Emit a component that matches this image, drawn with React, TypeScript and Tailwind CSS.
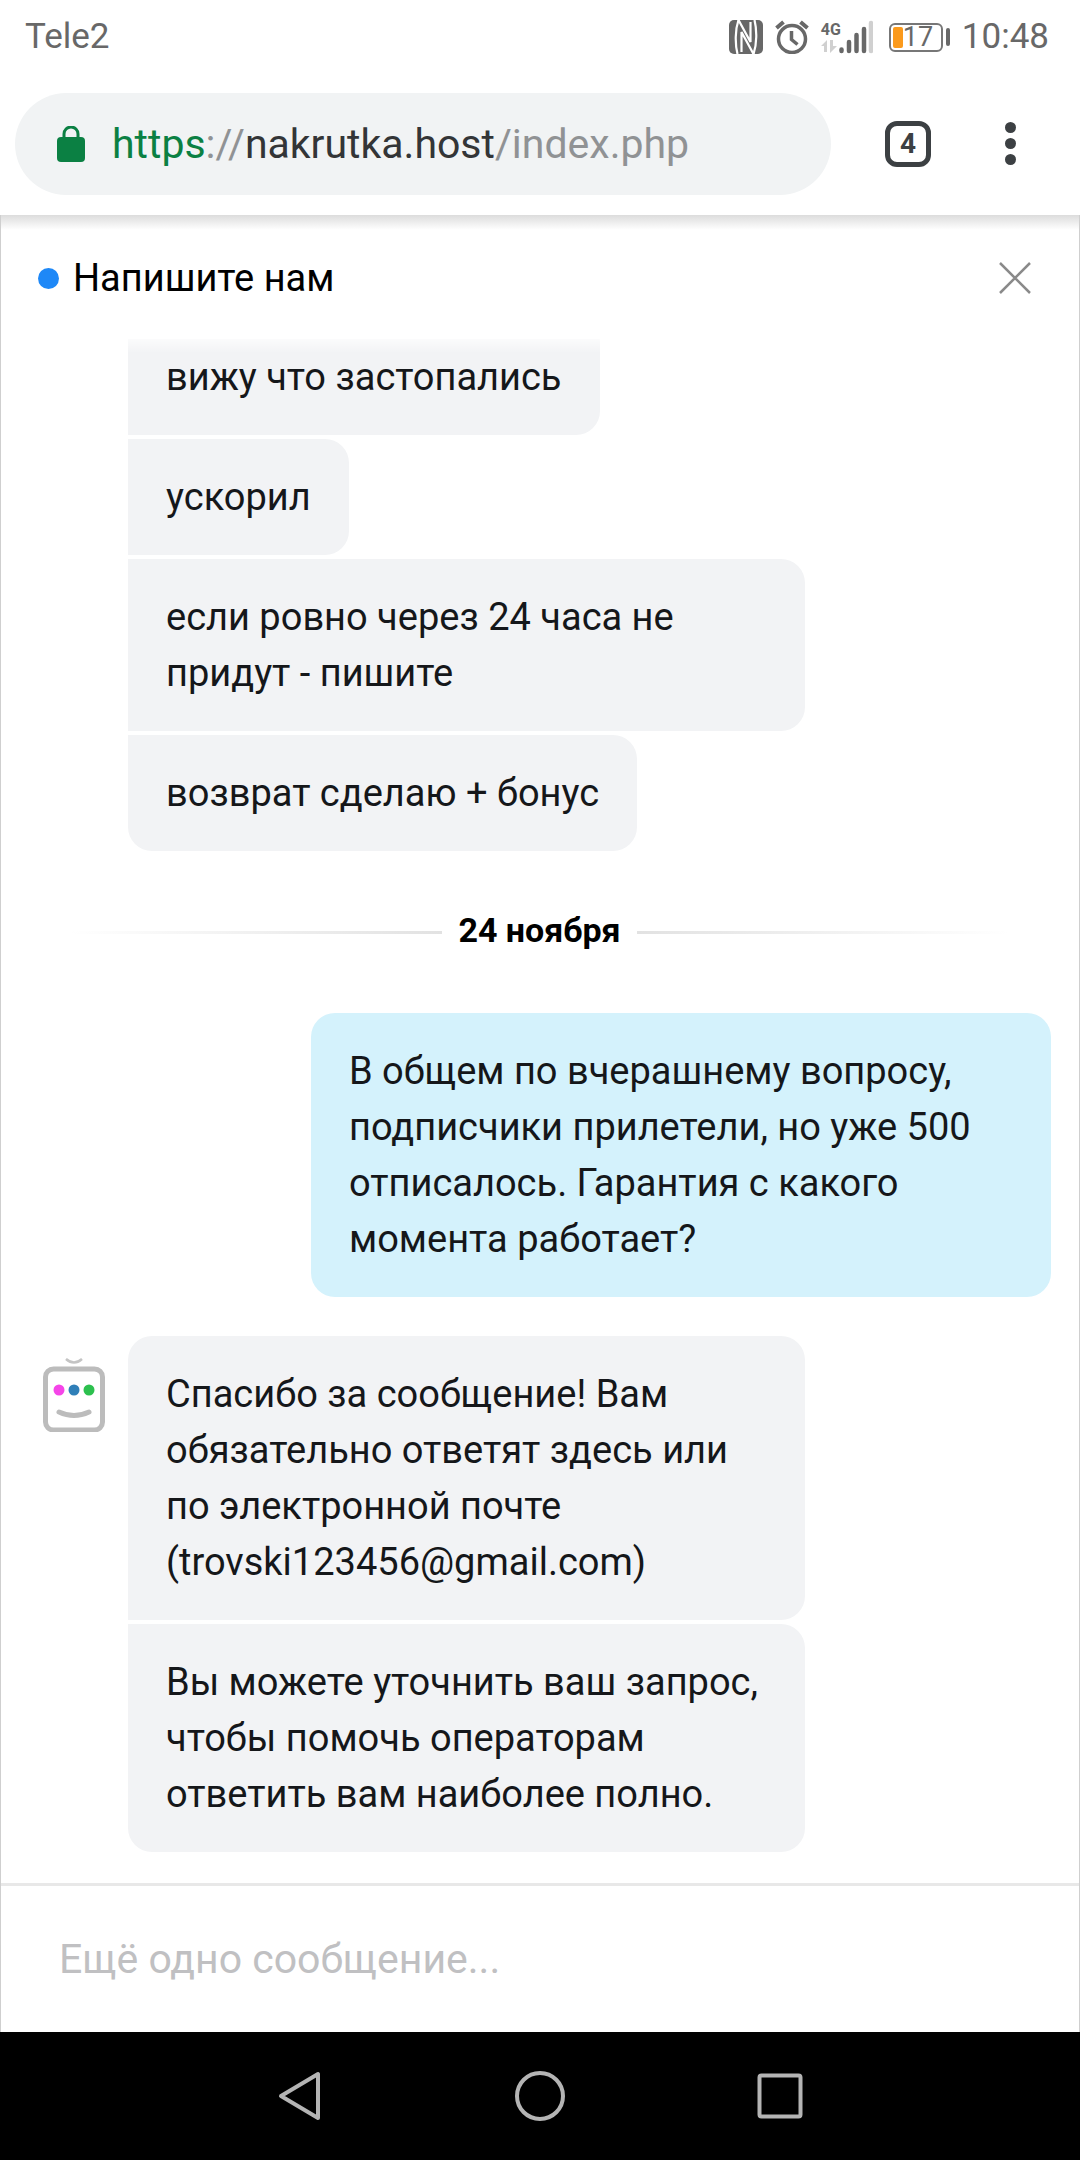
import React from "react";

type BubbleProps = {
  children: React.ReactNode;
  className?: string;
};

function Bubble({ children, className = "rounded-r-3xl" }: BubbleProps) {
  return (
    <div
      className={`w-fit max-w-[677px] shrink-0 bg-[#f2f3f5] px-[38px] py-[30px] ${className}`}
    >
      {children}
    </div>
  );
}

function NfcIcon() {
  return (
    <svg viewBox="0 0 34 34" className="w-[34px] h-[34px]">
      <rect width="34" height="34" rx="5" fill="#686868" />
      <g fill="none" stroke="#fff" strokeWidth="2.2">
        <path d="M9.500 0C6 10 6 24 8.500 34" />
        <path d="M24.500 34C28 24 28 10 25.500 0" />
        <path d="M9.500 0L21.500 22V2" />
        <path d="M12.500 32V12L24.500 34" />
      </g>
    </svg>
  );
}

function AlarmIcon() {
  return (
    <svg
      viewBox="0 0 34 34"
      className="w-[34px] h-[34px]"
      fill="none"
      stroke="#686868"
      strokeWidth="3.5"
    >
      <circle cx="17" cy="19" r="13.5" />
      <path d="M16.500 11v8.500l6 5" />
      <path d="M1.500 8l7-6M32.500 8l-7-6" strokeWidth="4" />
    </svg>
  );
}

function SignalIcon() {
  return (
    <div className="flex items-end gap-0.5 text-[#686868]">
      <div className="flex flex-col items-start">
        <span className="text-[16px] leading-5 font-bold">4G</span>
        <svg viewBox="0 0 16 14" className="w-4 h-3.5">
          <path d="M0 6l6-6v12H3V6zM9 0v13l7-7h-4V0z" fill="#d0d0d0" />
        </svg>
      </div>
      <svg viewBox="0 0 34 34" className="-ml-1 w-[34px] h-[34px]">
        <g stroke="#686868" strokeWidth="4.5" strokeLinecap="round">
          <path d="M2.500 29.500v1.500M10 22v9M17.500 15v16M25 9v22" />
          <path d="M32 3v28" stroke="#d0d0d0" />
        </g>
      </svg>
    </div>
  );
}

function StatusBar() {
  return (
    <div className="flex h-[74px] shrink-0 items-center justify-between pl-[25px] pr-[31px] text-[35px] text-[#686868]">
      <span>Tele2</span>
      <div className="flex items-center">
        <NfcIcon />
        <div className="ml-3">
          <AlarmIcon />
        </div>
        <div className="ml-3">
          <SignalIcon />
        </div>
        <div className="ml-4 flex h-[29px] w-[54px] items-center rounded-md border-2 border-[#777] pl-0.5">
          <div className="h-[21px] w-2.5 rounded-xs bg-[#fb9a1c]" />
          <span className="text-[27px] leading-6">17</span>
        </div>
        <div className="ml-[3px] h-[18px] w-1 rounded-full bg-[#686868]" />
        <span className="ml-3">10:48</span>
      </div>
    </div>
  );
}

function AddressBar() {
  return (
    <div className="flex h-[141px] shrink-0 items-center pl-[15px] pr-16 pb-0.5">
      <div className="flex h-[102px] flex-1 items-center rounded-full bg-[#f1f3f4] pl-[42px]">
        <svg viewBox="0 0 28 36" className="w-7 h-9">
          <rect y="11" width="28" height="25" rx="4" fill="#0b8043" />
          <path
            d="M7 13V8a6.500 6.500 0 0 1 14 0v5"
            fill="none"
            stroke="#0b8043"
            strokeWidth="3"
          />
        </svg>
        <a
          href="#"
          className="ml-[27px] pt-0.5 whitespace-nowrap text-[41px] text-[#909294]"
        >
          <span className="text-[#0b8043]">https</span>://
          <span className="text-[#333537]">nakrutka.host</span>/index.php
        </a>
      </div>
      <button
        aria-label="4"
        className="ml-[54px] flex h-[46px] w-[46px] items-center justify-center rounded-xl border-[5px] border-[#3c4043] text-[28px] leading-none font-bold text-[#3c4043]"
      >
        4
      </button>
      <button
        aria-label="Меню"
        className="ml-[73px] flex w-[12px] flex-col items-center gap-[5px]"
      >
        <span className="h-[11px] w-[11px] rounded-full bg-[#3c4043]" />
        <span className="h-[11px] w-[11px] rounded-full bg-[#3c4043]" />
        <span className="h-[11px] w-[11px] rounded-full bg-[#3c4043]" />
      </button>
    </div>
  );
}

function BotAvatar() {
  return (
    <svg viewBox="0 0 62 76" className="mt-5 w-[62px] h-[76px]" fill="none">
      <path d="M23 3q8 7 16 0" stroke="#c4c4c4" strokeWidth="2.500" />
      <rect
        x="2.500"
        y="13"
        width="57"
        height="61"
        rx="8"
        stroke="#bcbcbc"
        strokeWidth="5"
      />
      <circle cx="16" cy="34" r="5.500" fill="#f545e8" />
      <circle cx="31" cy="34" r="5.500" fill="#2f7fb8" />
      <circle cx="46" cy="34" r="5.500" fill="#2cc04e" />
      <path
        d="M16 56q15 7 30 0"
        stroke="#bcbcbc"
        strokeWidth="5"
        strokeLinecap="round"
      />
    </svg>
  );
}

function ChatHeader() {
  return (
    <div className="flex h-[124px] shrink-0 items-center justify-between bg-linear-to-b from-[#dcdcdc] via-white via-[12%] to-white pt-0.5 pl-[37px] pr-12">
      <div className="flex items-center gap-3.5">
        <span className="h-[21px] w-[21px] rounded-full bg-[#1e88f7]" />
        <h1 className="text-[38px] text-black">Напишите нам</h1>
      </div>
      <button aria-label="Закрыть">
        <svg viewBox="0 0 32 32" className="w-8 h-8">
          <path d="M1 1l30 30M31 1L1 31" stroke="#8a8a8a" strokeWidth="2.500" />
        </svg>
      </button>
    </div>
  );
}

function Messages() {
  return (
    <div className="relative flex min-h-0 flex-1 flex-col justify-end overflow-hidden pb-[31px] pl-[127px] pr-7 text-[38px] leading-14 text-[#15171a]">
      <div className="absolute inset-x-0 top-0 h-3.5 bg-linear-to-b from-white/70 to-white/0" />
      <div className="flex shrink-0 flex-col gap-1">
        <Bubble>вижу что застопались</Bubble>
        <Bubble>ускорил</Bubble>
        <Bubble>если ровно через 24 часа не придут - пишите</Bubble>
        <Bubble className="rounded-r-3xl rounded-bl-3xl">
          возврат сделаю + бонус
        </Bubble>
      </div>

      <div className="-ml-[58px] mr-[42px] flex h-[162px] shrink-0 items-center gap-4">
        <div className="h-[3px] flex-1 bg-linear-to-l from-[#e2e2e2] to-white" />
        <span className="pb-1 text-[34px] font-bold text-black">24 ноября</span>
        <div className="h-[3px] flex-1 bg-linear-to-r from-[#e2e2e2] to-white" />
      </div>

      <div className="w-[740px] shrink-0 self-end rounded-3xl bg-[#d4f2fc] px-[38px] py-[30px]">
        В общем по вчерашнему вопросу, подписчики прилетели, но уже 500
        отписалось. Гарантия с какого момента работает?
      </div>

      <div className="-ml-[85px] mt-[39px] flex shrink-0 items-start gap-[23px]">
        <BotAvatar />
        <div className="flex flex-col gap-1">
          <Bubble className="rounded-r-3xl rounded-tl-3xl">
            Спасибо за сообщение! Вам обязательно ответят здесь или по
            электронной почте (trovski123456@gmail.com)
          </Bubble>
          <Bubble className="rounded-r-3xl rounded-bl-3xl">
            Вы можете уточнить ваш запрос, чтобы помочь операторам ответить вам
            наиболее полно.
          </Bubble>
        </div>
      </div>
    </div>
  );
}

function NavBar() {
  return (
    <nav className="flex h-32 shrink-0 items-center justify-center gap-[190px] bg-black">
      <button aria-label="Назад">
        <svg viewBox="0 0 50 50" className="w-[50px] h-[50px]" fill="none">
          <path
            d="M43 3v44L6 25z"
            stroke="#b4b4b4"
            strokeWidth="4"
            strokeLinejoin="round"
          />
        </svg>
      </button>
      <button aria-label="Домой">
        <svg viewBox="0 0 50 50" className="w-[50px] h-[50px]" fill="none">
          <circle cx="25" cy="25" r="23" stroke="#b4b4b4" strokeWidth="4" />
        </svg>
      </button>
      <button aria-label="Недавние">
        <svg viewBox="0 0 50 50" className="w-[50px] h-[50px]" fill="none">
          <rect
            x="4.500"
            y="4.500"
            width="41"
            height="41"
            rx="2"
            stroke="#b4b4b4"
            strokeWidth="4"
          />
        </svg>
      </button>
    </nav>
  );
}

export default function App() {
  return (
    <div className="flex h-screen flex-col bg-white font-[Roboto,'Noto_Sans',sans-serif]">
      <StatusBar />
      <AddressBar />
      <main className="flex min-h-0 flex-1 flex-col border-x border-[#cfcfcf]">
        <ChatHeader />
        <Messages />
        <div className="shrink-0 border-t-[3px] border-[#e8e8e8]">
          <input
            type="text"
            aria-label="Сообщение"
            placeholder="Ещё одно сообщение..."
            className="h-[146px] w-full px-[58px] text-[41px] placeholder-[#c0c0c2] outline-none"
          />
        </div>
      </main>
      <NavBar />
    </div>
  );
}
